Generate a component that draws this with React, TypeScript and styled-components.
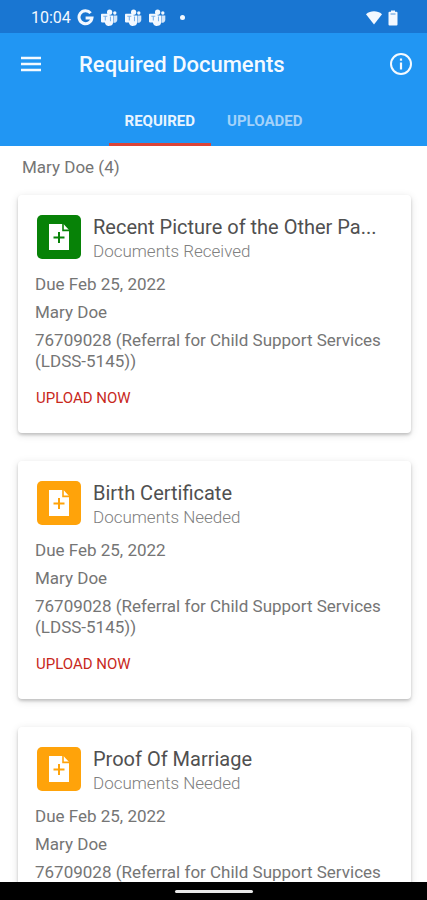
import React from "react";
import styled, { createGlobalStyle } from "styled-components";

const GlobalStyle = createGlobalStyle`
  * { box-sizing: border-box; }
  body { margin: 0; background: #fff; font-family: Roboto, "Noto Sans", sans-serif; }
  h1, h2, p, ul { margin: 0; padding: 0; }
  button { border: 0; padding: 0; background: none; font: inherit; cursor: pointer; }
  svg { display: block; }
`;

const Screen = styled.div`
  height: 100vh;
  display: flex;
  flex-direction: column;
  overflow: hidden;
  background: #fff;
`;

const StatusBar = styled.div`
  flex: none;
  height: 33px;
  padding: 2px 29px 0 31px;
  display: flex;
  align-items: center;
  justify-content: space-between;
  background: #1976d2;
  color: #f2f8ff;
`;

const StatusGroup = styled.div`
  display: flex;
  align-items: center;
  gap: 6px;
`;

const Clock = styled.span`
  font-size: 16px;
  line-height: 20px;
`;

const MoreDot = styled.span`
  width: 5px;
  height: 5px;
  margin-left: 8px;
  border-radius: 50%;
  background: currentColor;
`;

const Header = styled.header`
  flex: none;
  background: #2196f3;
  color: #f4faff;
`;

const Toolbar = styled.div`
  height: 62px;
  padding: 0 14px 0 21px;
  display: flex;
  align-items: center;
`;

const IconButton = styled.button`
  flex: none;
  color: inherit;
`;

const PageTitle = styled.h1`
  flex: 1;
  margin-left: 38px;
  padding-top: 2px;
  font-size: 22px;
  line-height: 28px;
  font-weight: 500;
`;

const Tabs = styled.div`
  display: flex;
  justify-content: center;
`;

const Tab = styled.button<{ $active?: boolean }>`
  height: 51px;
  padding: 3px 16px 0;
  border-bottom: 3px solid ${(p) => (p.$active ? "#db4437" : "transparent")};
  color: ${(p) => (p.$active ? "#e8f4ff" : "#a3d2fa")};
  font-size: 15px;
  line-height: 20px;
  font-weight: 700;
`;

const Content = styled.main`
  flex: 1;
  min-height: 0;
  overflow: hidden;
  padding: 11px 16px 0 18px;
`;

const GroupLabel = styled.p`
  padding-left: 4px;
  font-size: 17px;
  line-height: 20px;
  color: #757575;
`;

const CardList = styled.ul`
  margin-top: 18px;
  display: flex;
  flex-direction: column;
  gap: 28px;
  list-style: none;
`;

const Card = styled.li`
  padding: 20px 17px 25px;
  border-radius: 4px;
  background: #fff;
  box-shadow: 0 2px 3px rgba(0, 0, 0, 0.18), 0 2px 8px rgba(0, 0, 0, 0.12);
`;

const CardHead = styled.div`
  display: flex;
  gap: 12px;
  padding-left: 2px;
`;

const Badge = styled.div<{ $color: string }>`
  flex: none;
  width: 44px;
  height: 44px;
  border-radius: 5px;
  display: flex;
  align-items: center;
  justify-content: center;
  background: ${(p) => p.$color};
  color: ${(p) => p.$color};
`;

const CardTitle = styled.h2`
  font-size: 20px;
  line-height: 24px;
  font-weight: 400;
  color: #505050;
  white-space: nowrap;
`;

const CardStatus = styled.p`
  font-size: 17px;
  line-height: 24px;
  font-weight: 300;
  color: #808080;
`;

const Details = styled.div`
  margin-top: 11px;
  display: flex;
  flex-direction: column;
  gap: 7px;
  font-size: 17px;
  line-height: 21px;
  color: #757575;
`;

const UploadButton = styled.button`
  display: block;
  margin: 16px 0 0 1px;
  font-size: 15px;
  line-height: 20px;
  color: #c8281c;
`;

const NavBar = styled.div`
  flex: none;
  height: 18px;
  display: flex;
  align-items: center;
  justify-content: center;
  background: #000;
`;

const HomeHandle = styled.div`
  width: 78px;
  height: 3px;
  border-radius: 2px;
  background: #e8e8e8;
`;

const GoogleIcon = () => (
  <svg width="17" height="17" viewBox="0 0 17 17" fill="none" stroke="currentColor" strokeWidth="3">
    <path d="M13.6 4.1A6.5 6.5 0 1 0 15 8.9H8.6" />
  </svg>
);

const TeamsIcon = () => (
  <svg width="18" height="17" viewBox="0 0 18 17">
    <circle cx="9.6" cy="3.2" r="2.6" fill="currentColor" />
    <circle cx="14.8" cy="4" r="1.7" fill="currentColor" />
    <path d="M13.4 6.6h3.9v4.4a3 3 0 0 1-3.9 2.7z" fill="currentColor" opacity="0.85" />
    <path d="M6.5 6.4h6.5v5.6a4.2 4.2 0 0 1-8.2 1.8z" fill="currentColor" />
    <rect x="1" y="4.8" width="8.6" height="8.6" rx="0.8" fill="currentColor" />
    <path d="M3.3 7.2h4M5.3 7.2v4.2M10.5 7.4v4.8" stroke="#7db3ea" strokeWidth="1.1" fill="none" />
  </svg>
);

const WifiIcon = () => (
  <svg width="16" height="14" viewBox="0 0 16 14" fill="currentColor">
    <path d="M0 3.2C4.6-.6 11.4-.6 16 3.2L8 13.6z" />
  </svg>
);

const BatteryIcon = () => (
  <svg width="10" height="16" viewBox="0 0 10 16">
    <path d="M3 0.5h4v1.3h1.5a1 1 0 0 1 1 1V14.5a1 1 0 0 1-1 1h-7a1 1 0 0 1-1-1V2.8a1 1 0 0 1 1-1H3z" fill="currentColor" />
    <path d="M2.5 4h5" stroke="#6aa6e2" strokeWidth="1.2" />
  </svg>
);

const MenuIcon = () => (
  <svg width="20" height="16" viewBox="0 0 20 16" stroke="currentColor" strokeWidth="2.6">
    <path d="M0 2h20M0 8h20M0 14h20" />
  </svg>
);

const InfoIcon = () => (
  <svg width="24" height="24" viewBox="0 0 24 24" fill="none" stroke="currentColor">
    <circle cx="12" cy="12" r="10" strokeWidth="2" />
    <path d="M12 10.5v7" strokeWidth="2.2" />
    <path d="M12 6.5v2.2" strokeWidth="2.2" />
  </svg>
);

const AddFileIcon = () => (
  <svg width="22" height="28" viewBox="0 0 22 28">
    <path d="M1 1h14.5l5.5 6v20H1z" fill="#fff" />
    <path d="M15 1v6.4h6" fill="none" stroke="currentColor" strokeWidth="1.6" />
    <path d="M11 9v11M5.5 14.5h11" stroke="currentColor" strokeWidth="2" />
  </svg>
);

const documents = [
  { title: "Recent Picture of the Other Pa...", status: "Documents Received", color: "#078207" },
  { title: "Birth Certificate", status: "Documents Needed", color: "#ffa30a" },
  { title: "Proof Of Marriage", status: "Documents Needed", color: "#ffa30a" },
];

export default function App() {
  return (
    <Screen>
      <GlobalStyle />
      <StatusBar>
        <StatusGroup>
          <Clock>10:04</Clock>
          <GoogleIcon />
          <TeamsIcon />
          <TeamsIcon />
          <TeamsIcon />
          <MoreDot />
        </StatusGroup>
        <StatusGroup>
          <WifiIcon />
          <BatteryIcon />
        </StatusGroup>
      </StatusBar>
      <Header>
        <Toolbar>
          <IconButton aria-label="Open menu">
            <MenuIcon />
          </IconButton>
          <PageTitle>Required Documents</PageTitle>
          <IconButton aria-label="Information">
            <InfoIcon />
          </IconButton>
        </Toolbar>
        <Tabs role="tablist">
          <Tab role="tab" aria-selected $active>REQUIRED</Tab>
          <Tab role="tab" aria-selected={false}>UPLOADED</Tab>
        </Tabs>
      </Header>
      <Content>
        <GroupLabel>Mary Doe (4)</GroupLabel>
        <CardList>
          {documents.map((doc) => (
            <Card key={doc.title}>
              <CardHead>
                <Badge $color={doc.color}>
                  <AddFileIcon />
                </Badge>
                <div>
                  <CardTitle>{doc.title}</CardTitle>
                  <CardStatus>{doc.status}</CardStatus>
                </div>
              </CardHead>
              <Details>
                <p>Due Feb 25, 2022</p>
                <p>Mary Doe</p>
                <p>76709028 (Referral for Child Support Services (LDSS-5145))</p>
              </Details>
              <UploadButton>UPLOAD NOW</UploadButton>
            </Card>
          ))}
        </CardList>
      </Content>
      <NavBar>
        <HomeHandle />
      </NavBar>
    </Screen>
  );
}
